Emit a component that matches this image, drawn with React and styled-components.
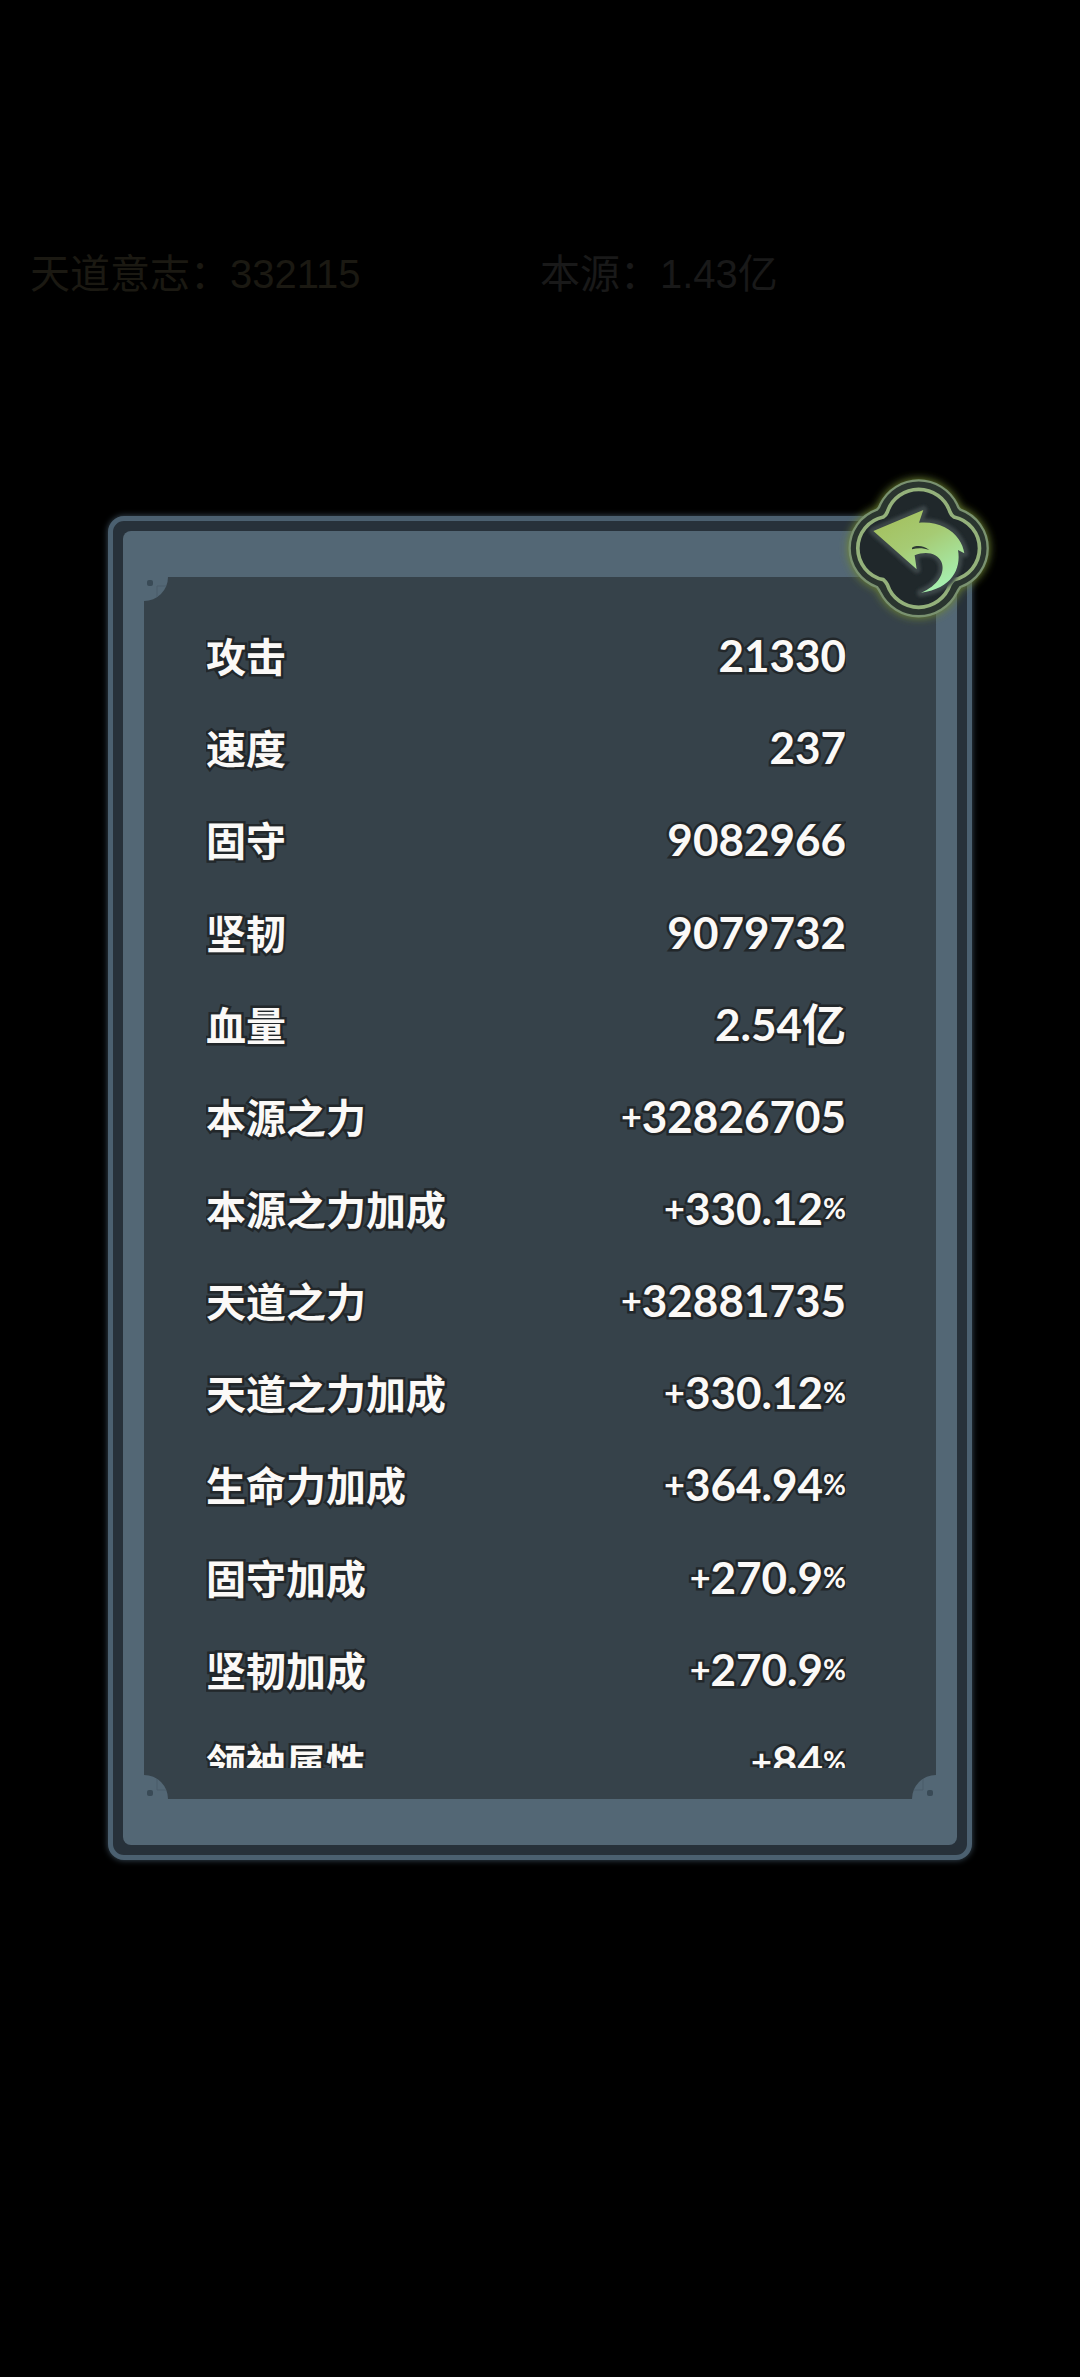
import styled, { createGlobalStyle, css } from 'styled-components';

const resources = [
    { label: '天道意志', value: '332115', color: '#1b1912' },
    { label: '本源', value: '1.43亿', color: '#191919' },
];

const stats = [
    { label: '攻击', value: '21330' },
    { label: '速度', value: '237' },
    { label: '固守', value: '9082966' },
    { label: '坚韧', value: '9079732' },
    { label: '血量', value: '2.54亿' },
    { label: '本源之力', value: '32826705', bonus: true },
    { label: '本源之力加成', value: '330.12', bonus: true, percent: true },
    { label: '天道之力', value: '32881735', bonus: true },
    { label: '天道之力加成', value: '330.12', bonus: true, percent: true },
    { label: '生命力加成', value: '364.94', bonus: true, percent: true },
    { label: '固守加成', value: '270.9', bonus: true, percent: true },
    { label: '坚韧加成', value: '270.9', bonus: true, percent: true },
    { label: '领袖属性', value: '84', bonus: true, percent: true },
];

const corners = ['top-left', 'top-right', 'bottom-left', 'bottom-right'];

const arrowPath = 'M160 213L310 150L297 188C350 183 395 205 416 238C426 252 430 264 433 280L414 270C424 326 396 386 303 398C352 378 378 338 364 305C352 278 316 272 284 286L290 328Z';
const outerRing = 'M171 149Q178 142 181 133A128 128 0 0 1 411 133Q414 142 421 149A123 123 0 0 1 421 381Q414 390 411 397A128 128 0 0 1 181 397Q178 390 171 381A123 123 0 0 1 171 149Z';
const innerRing = 'M190 171Q198 166 202 156A99 99 0 0 1 390 156Q394 166 402 171A96 96 0 0 1 402 359Q394 366 390 374A99 99 0 0 1 202 374Q198 366 190 359A96 96 0 0 1 190 171Z';

function CornerOrnament({ place }) {
    return (
        <Corner $place={ place } viewBox="0 0 24 24" aria-hidden="true">
            <path d="M0 0H24A24 24 0 0 1 0 24Z" fill="#536775" />
            <path d="M13 9V20M13 9H22" stroke="#4a5d6a" fill="none" />
            <rect x="3" y="3" width="6" height="6" rx="2" fill="#394a56" />
        </Corner>
    );
}

function BackIcon() {
    return (
        <svg width="190" height="180" viewBox="0 0 570 540" aria-hidden="true">
            <defs>
                <linearGradient id="arrowFill" x1="0" y1="0" x2="0.6" y2="1">
                    <stop offset="0" stopColor="#a3bd58" />
                    <stop offset="0.5" stopColor="#a6cb74" />
                    <stop offset="1" stopColor="#a6eeae" />
                </linearGradient>
                <filter id="glow" x="-20%" y="-20%" width="140%" height="140%">
                    <feGaussianBlur stdDeviation="13" />
                </filter>
                <filter id="soft">
                    <feGaussianBlur stdDeviation="4" />
                </filter>
            </defs>
            <path d={ outerRing } fill="#6f8630" stroke="#6f8630" strokeWidth="10" filter="url(#glow)" />
            <path d={ outerRing } fill="#2a352f" stroke="#7a9270" strokeWidth="7" />
            <path d={ innerRing } fill="#20282b" stroke="#94b17b" strokeWidth="11" />
            <path
                d={ arrowPath }
                fill="#3b4447"
                stroke="#3b4447"
                strokeWidth="24"
                strokeLinejoin="round"
                filter="url(#soft)" />
            <path d={ arrowPath } fill="url(#arrowFill)" />
            <path d="M276 263C294 254 312 259 328 270C310 264 294 263 276 268Z" fill="#2d3a34" />
        </svg>
    );
}

function StatRow({ label, value, bonus, percent }) {
    return (
        <Row>
            <Label>{ label }</Label>
            <Value>
                { bonus && <Sign>+</Sign> }
                { value }
                { percent && <Percent>%</Percent> }
            </Value>
        </Row>
    );
}

function App() {
    return (
        <Page>
            <GlobalStyle />
            <Resources>
                { resources.map(({ label, value, color }) => (
                    <Resource key={ label } $color={ color }>{ label }：{ value }</Resource>
                )) }
            </Resources>
            <Panel>
                <Frame>
                    <Content>
                        { corners.map((place) => <CornerOrnament key={ place } place={ place } />) }
                        <Scroller>
                            <StatList>
                                { stats.map((stat) => <StatRow key={ stat.label } { ...stat } />) }
                            </StatList>
                        </Scroller>
                    </Content>
                </Frame>
                <BackButton type="button" aria-label="返回">
                    <BackIcon />
                </BackButton>
            </Panel>
        </Page>
    );
}

const GlobalStyle = createGlobalStyle`
    * {
        box-sizing: border-box;
    }

    body {
        margin: 0;
        background-color: #000;
    }
`;

const Page = styled.main`
    min-height: 100vh;
    padding-top: 244px;
    font-family: 'Liberation Sans', 'Noto Sans CJK SC', sans-serif;
`;

const Resources = styled.header`
    display: grid;
    grid-template-columns: 1fr 1fr;
    padding: 0 30px;
`;

const Resource = styled.span`
    font-size: 40px;
    line-height: 60px;
    color: ${({ $color }) => $color};
`;

const Panel = styled.section`
    position: relative;
    margin: 212px 108px 0;
    padding: 10px;
    background-color: #27313a;
    border: 5px solid #4b6070;
    border-radius: 16px;
    box-shadow: 0 0 6px #3c4e5c;
`;

const Frame = styled.div`
    padding: 46px 21px;
    background-color: #536775;
    border-radius: 8px;
`;

const Content = styled.div`
    position: relative;
    padding: 32px 90px 31px 62px;
    background-color: #36424a;
`;

const Corner = styled.svg`
    position: absolute;
    width: 24px;
    height: 24px;

    ${({ $place }) => $place === 'top-left' && css`
        top: 0;
        left: 0;
    `}

    ${({ $place }) => $place === 'top-right' && css`
        top: 0;
        right: 0;
        transform: scaleX(-1);
    `}

    ${({ $place }) => $place === 'bottom-left' && css`
        bottom: 0;
        left: 0;
        transform: scaleY(-1);
    `}

    ${({ $place }) => $place === 'bottom-right' && css`
        right: 0;
        bottom: 0;
        transform: scale(-1);
    `}
`;

const Scroller = styled.div`
    height: 1159px;
    overflow-y: auto;
    scrollbar-width: none;
`;

const StatList = styled.dl`
    display: grid;
    grid-auto-rows: 1fr;
    height: 1198px;
    margin: 0;
    color: #fbf9f7;
    -webkit-text-stroke: 5px #22272a;
    paint-order: stroke fill;
`;

const Row = styled.div`
    display: flex;
    justify-content: space-between;
    align-items: center;
`;

const Label = styled.dt`
    font-family: 'Noto Sans CJK SC', sans-serif;
    font-size: 40px;
    font-weight: 700;
    line-height: 60px;
`;

const Value = styled.dd`
    display: flex;
    align-items: center;
    margin: 0;
    font-family: Lato, 'Noto Sans CJK SC', sans-serif;
    font-size: 44px;
    font-weight: 700;
    line-height: 60px;
`;

const Sign = styled.span`
    font-size: 36px;
`;

const Percent = styled.span`
    font-size: 28px;
`;

const BackButton = styled.button`
    position: absolute;
    top: -61px;
    right: -43px;
    display: flex;
    padding: 0;
    background: none;
    border: none;
    cursor: pointer;
`;

export default App;
